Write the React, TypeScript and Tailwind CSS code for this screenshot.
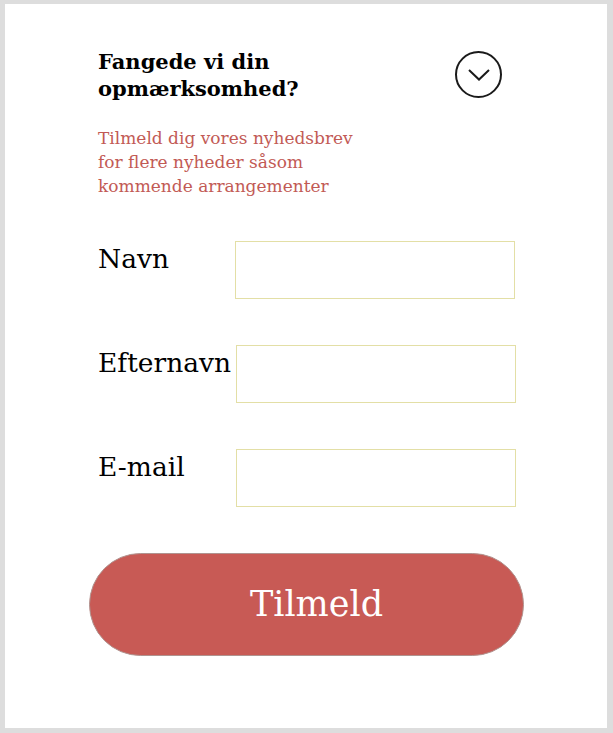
export default function App() {
  const fields = ['Navn', 'Efternavn', 'E-mail'];
  return (
    <div className="h-screen w-full bg-[#dddddd] pt-[4px] pl-[5px] pr-[6px] pb-[5px]">
      <div
        className="h-full w-full bg-white pt-[44px] pl-[93px]"
        style={{ fontFamily: '"DejaVu Serif", "Liberation Serif", serif' }}
      >
        <div className="flex w-[410px] items-start justify-between">
          <h1 className="text-[21px] font-bold leading-[27px] text-black">
            Fangede vi din
            <br />
            opmærksomhed?
          </h1>
          <button className="mr-[6px] mt-[3px] flex h-[47px] w-[47px] items-center justify-center rounded-full border-2 border-[#1a1a1a]">
            <svg width="22" height="12" viewBox="0 0 22 12" fill="none">
              <path d="M1 1 L11 10.5 L21 1" stroke="#1a1a1a" strokeWidth="2" />
            </svg>
          </button>
        </div>

        <p className="mt-[24px] text-[17px] leading-[24px] text-[#c25a55]">
          Tilmeld dig vores nyhedsbrev
          <br />
          for flere nyheder såsom
          <br />
          kommende arrangementer
        </p>

        <div className="mt-[43px] flex flex-col gap-[46px]">
          {fields.map((f, i) => (
            <div key={f} className="flex items-start">
              <label className="w-[137px] pt-[1px] text-[26.5px] leading-[34px] text-black">{f}</label>
              <input
                className={`h-[58px] w-[280px] border border-[#e3dfa6] bg-white outline-none ${i === 0 ? '' : 'ml-[1px]'}`}
              />
            </div>
          ))}
        </div>

        <button className="-ml-[9px] mt-[46px] flex h-[103px] w-[435px] items-center justify-center rounded-full border border-[#b0938f] bg-[#c85a55] pl-[20px] text-[35px] text-white">
          Tilmeld
        </button>
      </div>
    </div>
  );
}
